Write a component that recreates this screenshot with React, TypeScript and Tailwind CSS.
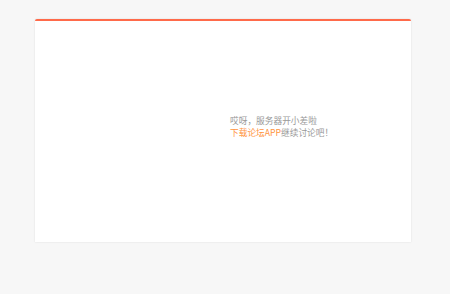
import React from 'react';

export default function App() {
  return (
    <div className="w-[450px] h-[294px] bg-[#f7f7f7] pt-[19px] pl-[35px]">
      <div className="w-[376px] h-[223px] bg-white border-t-[2px] border-[#ff6a4a] rounded-t-[2px] shadow-[0_0_2px_rgba(0,0,0,0.12)] flex items-center pl-[195px] pb-[9px]">
        <div
          className="text-[8.7px] leading-[12px] text-[#999999]"
          style={{ fontFamily: '"Noto Sans CJK SC", "Liberation Sans", sans-serif' }}
        >
          <p>哎呀，服务器开小差啦</p>
          <p>
            <span className="text-[#ff9440]">下载论坛APP</span>继续讨论吧！
          </p>
        </div>
      </div>
    </div>
  );
}
